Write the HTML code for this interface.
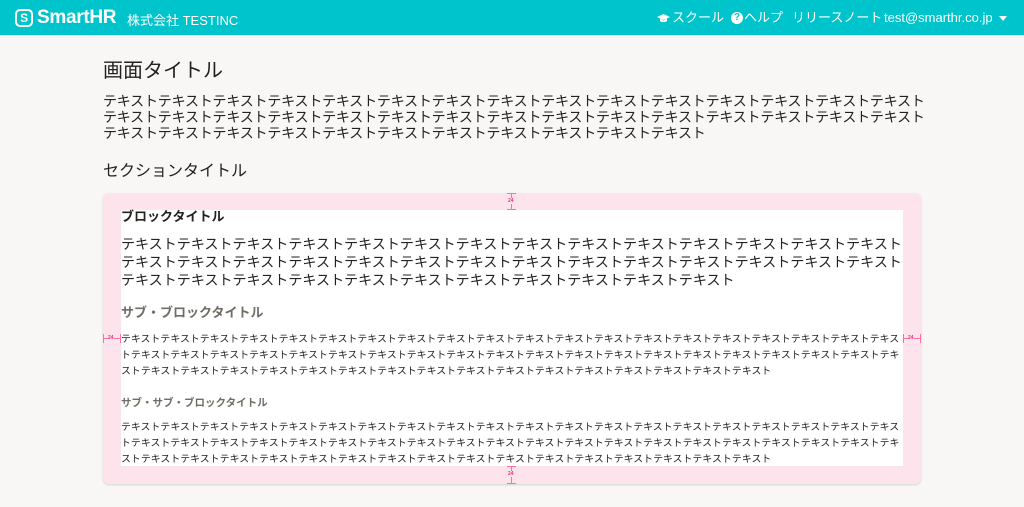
<!DOCTYPE html>
<html><head><meta charset="utf-8"><style>
*{margin:0;padding:0;box-sizing:border-box}
body{width:1024px;height:507px;background:#f8f7f6;font-family:"Liberation Sans","Noto Sans CJK JP",sans-serif;color:#23221f;overflow:hidden;position:relative}
.hd{height:35px;background:#00c4cc;color:#fff;position:relative}
.logo{position:absolute;left:15px;top:7px;font-weight:bold;font-size:19px;letter-spacing:-0.3px;display:flex;align-items:center}
.logo .s{width:18px;height:18px;border:2px solid #fff;border-radius:5px;font-size:12px;display:flex;align-items:center;justify-content:center;margin-right:4px}
.co{position:absolute;left:127px;top:10px;font-size:13px}
.nav{position:absolute;left:0;top:10px;font-size:13px}
.nav span{position:absolute;white-space:nowrap;line-height:16px;top:0}
.p{position:absolute;white-space:normal;word-break:break-all}
.mk{position:absolute;background:#ff6fa0}
.mt{position:absolute;font-size:5px;color:#e8357a;font-weight:bold}
</style></head><body>
<div class="hd">
<div class="logo"><span class="s">S</span>SmartHR</div>
<div class="co">株式会社 TESTINC</div>
<div class="nav">
<span style="left:657px;top:2px"><svg width="13" height="11" viewBox="0 0 13 11"><path d="M0 4L6.5 1 13 4 6.5 7Z" fill="#fff"/><path d="M3 5.5v2.5c1 1.5 6 1.5 7 0V5.5L6.5 7.5Z" fill="#fff"/></svg></span>
<span style="left:672px">スクール</span>
<span style="left:731px;top:2px;width:12px;height:12px;border-radius:50%;background:#fff;color:#00c4cc;font-size:10px;font-weight:bold;text-align:center;line-height:12px">?</span>
<span style="left:744px">ヘルプ</span>
<span style="left:792px">リリースノート</span>
<span style="left:884px">test@smarthr.co.jp</span>
<span style="left:999px;top:6px;width:0;height:0;border-left:4.5px solid transparent;border-right:4.5px solid transparent;border-top:5px solid #fff"></span>
</div>
</div>
<div class="p" style="left:103px;top:59px;font-size:20px;line-height:24px">画面タイトル</div>
<div class="p" style="left:103px;top:93px;width:822px;font-size:14px;letter-spacing:-0.2px;line-height:16px">テキストテキストテキストテキストテキストテキストテキストテキストテキストテキストテキストテキストテキストテキストテキストテキストテキストテキストテキストテキストテキストテキストテキストテキストテキストテキストテキストテキストテキストテキストテキストテキストテキストテキストテキストテキストテキストテキストテキストテキストテキスト</div>
<div class="p" style="left:103px;top:162px;font-size:16px;line-height:20px">セクションタイトル</div>
<div style="position:absolute;left:103px;top:193px;width:818px;height:291px;background:#fde4ec;border-radius:6px;box-shadow:0 1px 2px rgba(0,0,0,.15)"></div>
<div style="position:absolute;left:121px;top:210px;width:782px;height:256px;background:#fff"></div>
<div class="mk" style="left:511px;top:193px;width:1px;height:17px"></div><div class="mk" style="left:507px;top:193px;width:9px;height:1px"></div><div class="mk" style="left:507px;top:209px;width:9px;height:1px"></div><div class="mt" style="left:508px;top:198px;background:#fde4ec">24</div>
<div class="mk" style="left:511px;top:466px;width:1px;height:18px"></div><div class="mk" style="left:507px;top:466px;width:9px;height:1px"></div><div class="mk" style="left:507px;top:483px;width:9px;height:1px"></div><div class="mt" style="left:508px;top:471px;background:#fde4ec">24</div>
<div class="mk" style="left:103px;top:338px;width:18px;height:1px"></div><div class="mk" style="left:103px;top:334px;width:1px;height:9px"></div><div class="mk" style="left:120px;top:334px;width:1px;height:9px"></div><div class="mt" style="left:108px;top:335px;background:#fde4ec">24</div>
<div class="mk" style="left:903px;top:338px;width:18px;height:1px"></div><div class="mk" style="left:903px;top:334px;width:1px;height:9px"></div><div class="mk" style="left:920px;top:334px;width:1px;height:9px"></div><div class="mt" style="left:908px;top:335px;background:#fde4ec">24</div>
<div class="p" style="left:121px;top:208px;font-size:13px;font-weight:bold;line-height:18px">ブロックタイトル</div>
<div class="p" style="left:121px;top:235px;width:786px;font-size:14px;letter-spacing:0.05px;line-height:18px">テキストテキストテキストテキストテキストテキストテキストテキストテキストテキストテキストテキストテキストテキストテキストテキストテキストテキストテキストテキストテキストテキストテキストテキストテキストテキストテキストテキストテキストテキストテキストテキストテキストテキストテキストテキストテキストテキストテキスト</div>
<div class="p" style="left:121px;top:304px;font-size:13px;font-weight:bold;color:#706d65;line-height:18px">サブ・ブロックタイトル</div>
<div class="p" style="left:121px;top:332px;width:786px;font-size:9.9px;letter-spacing:0.05px;line-height:16px">テキストテキストテキストテキストテキストテキストテキストテキストテキストテキストテキストテキストテキストテキストテキストテキストテキストテキストテキストテキストテキストテキストテキストテキストテキストテキストテキストテキストテキストテキストテキストテキストテキストテキストテキストテキストテキストテキストテキストテキストテキストテキストテキストテキストテキストテキストテキストテキストテキストテキストテキストテキストテキストテキストテキストテキスト</div>
<div class="p" style="left:121px;top:395px;font-size:10.5px;font-weight:bold;color:#706d65;line-height:16px">サブ・サブ・ブロックタイトル</div>
<div class="p" style="left:121px;top:420px;width:786px;font-size:9.9px;letter-spacing:0.05px;line-height:16px">テキストテキストテキストテキストテキストテキストテキストテキストテキストテキストテキストテキストテキストテキストテキストテキストテキストテキストテキストテキストテキストテキストテキストテキストテキストテキストテキストテキストテキストテキストテキストテキストテキストテキストテキストテキストテキストテキストテキストテキストテキストテキストテキストテキストテキストテキストテキストテキストテキストテキストテキストテキストテキストテキストテキストテキスト</div>
</body></html>
